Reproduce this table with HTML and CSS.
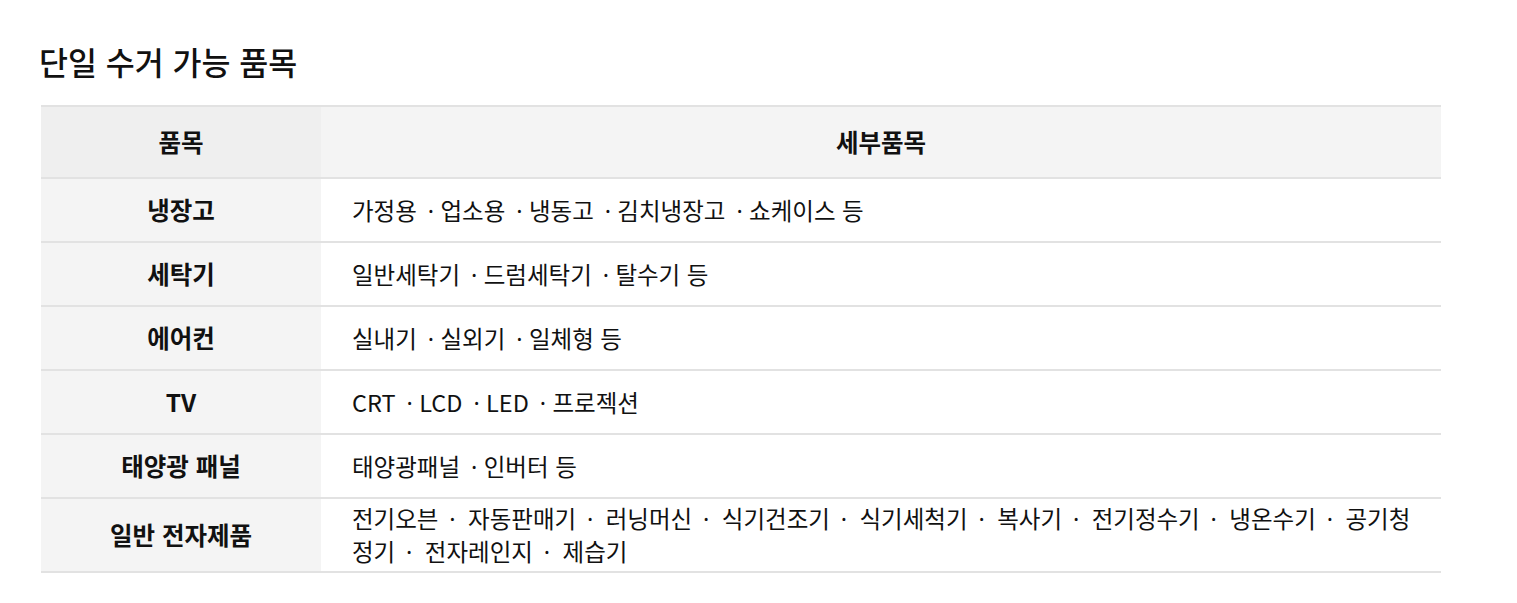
FILE: index.html
```html
<!DOCTYPE html>
<html lang="ko">
<head>
<meta charset="utf-8">
<title>단일 수거 가능 품목</title>
<link rel="stylesheet" href="styles.css">
</head>
<body>
<section class="wrap">
  <h2 class="title">단일 수거 가능 품목</h2>
  <table class="items">
    <colgroup><col class="c1"><col class="c2"></colgroup>
    <thead>
      <tr><th class="h1">품목</th><th class="h2">세부품목</th></tr>
    </thead>
    <tbody>
      <tr><th>냉장고</th><td>가정용 <span class="sep">·</span>업소용 <span class="sep">·</span>냉동고 <span class="sep">·</span>김치냉장고 <span class="sep">·</span>쇼케이스 등</td></tr>
      <tr><th>세탁기</th><td>일반세탁기 <span class="sep">·</span>드럼세탁기 <span class="sep">·</span>탈수기 등</td></tr>
      <tr><th>에어컨</th><td>실내기 <span class="sep">·</span>실외기 <span class="sep">·</span>일체형 등</td></tr>
      <tr><th>TV</th><td>CRT <span class="sep">·</span>LCD <span class="sep">·</span>LED <span class="sep">·</span>프로젝션</td></tr>
      <tr><th>태양광 패널</th><td>태양광패널 <span class="sep">·</span>인버터 등</td></tr>
      <tr class="multi"><th>일반 전자제품</th><td>전기오븐<span class="sep">·</span> 자동판매기<span class="sep">·</span> 러닝머신<span class="sep">·</span> 식기건조기<span class="sep">·</span> 식기세척기<span class="sep">·</span> 복사기<span class="sep">·</span> 전기정수기<span class="sep">·</span> 냉온수기<span class="sep">·</span> 공기청정기<span class="sep">·</span> 전자레인지<span class="sep">·</span> 제습기</td></tr>
    </tbody>
  </table>
</section>
</body>
</html>
```

FILE: styles.css
```css
* { box-sizing: border-box; }
html, body { margin: 0; padding: 0; background: #fff; }
body {
  font-family: "Noto Sans CJK KR", "Noto Sans", sans-serif;
  color: #111;
}
.wrap {
  padding: 40px 0 0 41px;
  width: 1441px;
}
.title {
  margin: 0 0 23px -2px;
  font-size: 31.5px;
  line-height: 42px;
  font-weight: 500;
  color: #111;
}
.items {
  width: 1400px;
  border-collapse: collapse;
  border-top: 2px solid #e2e2e2;
  font-size: 23.5px;
}
.c1 { width: 280px; }
.items th, .items td {
  border-bottom: 2px solid #e2e2e2;
  line-height: 32px;
  height: 64px;
  padding: 4px 0;
  vertical-align: middle;
}
.items th { font-size: 24.5px; }
.items thead th {
  height: 72px;
  font-weight: 700;
  text-align: center;
}
.items thead .h1 { background: #efefef; }
.items thead .h2 { background: #f4f4f4; }
.items tbody th {
  background: #f4f4f4;
  font-weight: 700;
  text-align: center;
}
.items tbody td {
  background: #fff;
  padding: 4px 20px 4px 31px;
  font-weight: 400;
}
.items .multi th,
.items .multi td {
  padding-top: 3px;
  padding-bottom: 3px;
}
.sep {
  display: inline-block;
  width: 17px;
  padding-right: 2px;
  text-align: center;
  font-family: "Noto Sans", "Liberation Sans", sans-serif;
}
.multi .sep {
  width: 23px;
  padding-left: 5px;
  padding-right: 0;
}
```
